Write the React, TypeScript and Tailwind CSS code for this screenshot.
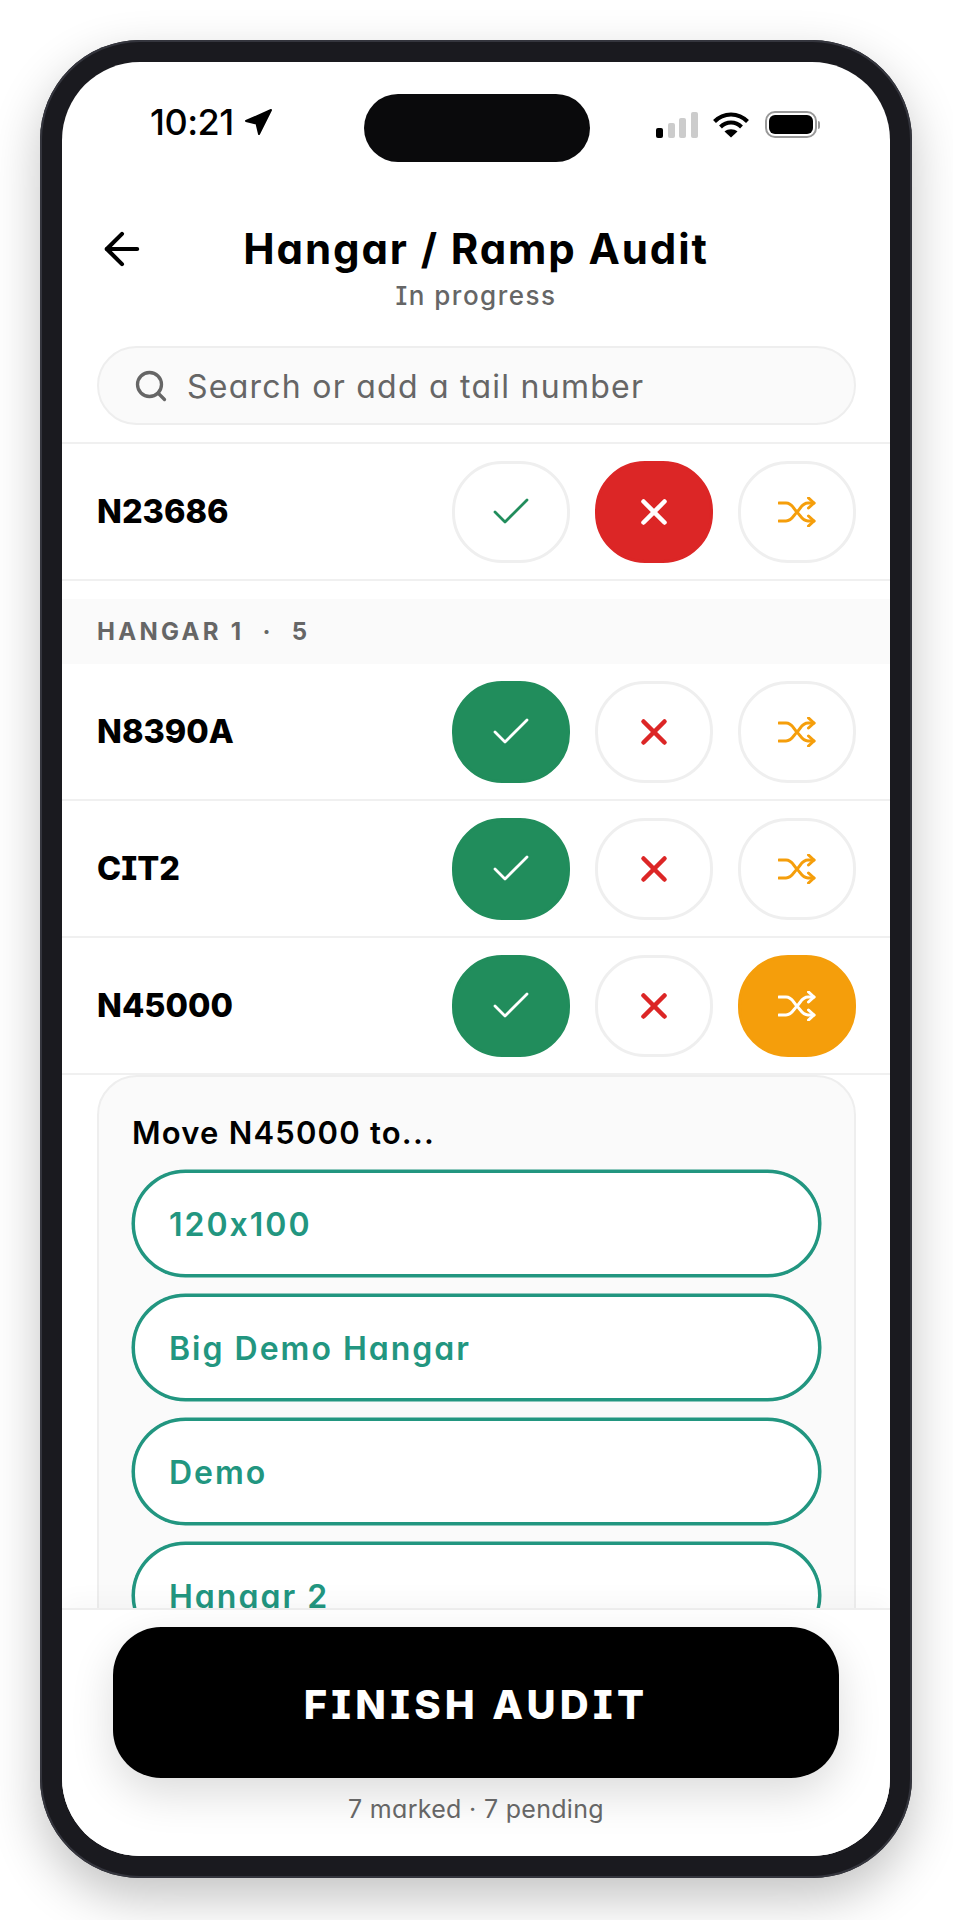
import { ArrowLeft, Check, Search, X } from "lucide-react";

type Mark = "none" | "ok" | "bad" | "move";

function ShuffleIcon() {
  return (
    <svg width="38" height="30" viewBox="0 0 38 30" fill="none" stroke="currentColor" strokeWidth="3" strokeLinecap="round" strokeLinejoin="round">
      <path d="M1 6H8C14 6 15 11 19 15C23 19 24 24 30 24H36" />
      <path d="M1 24H8C14 24 15 19 19 15C23 11 24 6 30 6H36" />
      <path d="M30.5 1L36 6L30.5 11" />
      <path d="M30.5 19L36 24L30.5 29" />
    </svg>
  );
}

function ActionButton({ kind, active }: { kind: "ok" | "bad" | "move"; active: boolean }) {
  const bg = active
    ? kind === "ok"
      ? "bg-[#218d5c] border-[#218d5c]"
      : kind === "bad"
        ? "bg-[#dc2626] border-[#dc2626]"
        : "bg-[#f59e0b] border-[#f59e0b]"
    : "bg-white border-[#efefef]";
  const color = active
    ? "text-white"
    : kind === "ok"
      ? "text-[#218d5c]"
      : kind === "bad"
        ? "text-[#dc2626]"
        : "text-[#f59e0b]";
  return (
    <div className={`w-[118px] h-[102px] rounded-[50px] border-[3px] flex items-center justify-center ${bg} ${color}`}>
      {kind === "ok" && <Check size={48} strokeWidth={1.4} />}
      {kind === "bad" && <X size={42} strokeWidth={2.6} />}
      {kind === "move" && <ShuffleIcon />}
    </div>
  );
}

function Row({ tail, mark, move }: { tail: string; mark: Mark; move?: boolean }) {
  return (
    <div className="h-[137px] shrink-0 border-b-2 border-[#f0f0f0] pl-[35px] pr-[34px] flex items-center justify-between">
      <span className="text-[32.5px] font-extrabold text-black pt-[2px]">{tail}</span>
      <div className="flex gap-[25px]">
        <ActionButton kind="ok" active={mark === "ok"} />
        <ActionButton kind="bad" active={mark === "bad"} />
        <ActionButton kind="move" active={!!move} />
      </div>
    </div>
  );
}

function MoveOption({ label }: { label: string }) {
  return (
    <div className="h-[107px] shrink-0 rounded-full border-[3px] border-[#229680] shadow-[0_0_0_0.5px_#229680] bg-white px-[34px] pt-[2px] flex items-center text-[32px] font-semibold tracking-[2px] text-[#229680]">
      {label}
    </div>
  );
}

function StatusIcons() {
  return (
    <div className="flex items-center gap-[15.5px] w-[164px]">
      <div className="flex items-end gap-[4.5px] h-[26px]">
        <div className="w-[7px] h-[10px] rounded-[2px] bg-black" />
        <div className="w-[7px] h-[15px] rounded-[2px] bg-[#cccccc]" />
        <div className="w-[7px] h-[20px] rounded-[2px] bg-[#cccccc]" />
        <div className="w-[7px] h-[26px] rounded-[2px] bg-[#cccccc]" />
      </div>
      <svg width="36" height="27" viewBox="0 0 36 27" fill="none" stroke="black" strokeWidth="4">
        <path d="M1.5 10.5C10.5 1 25.5 1 34.5 10.5" />
        <path d="M7.5 16C13.5 10 22.5 10 28.5 16" />
        <path d="M18 26.5L11.5 20.5C15 17.5 21 17.5 24.5 20.5Z" fill="black" stroke="none" />
      </svg>
      <div className="flex items-center gap-[1px]">
        <div className="w-[52px] h-[27px] rounded-[10px] border-2 border-[#999999] p-[2px]">
          <div className="w-full h-full rounded-[6px] bg-black" />
        </div>
        <div className="w-[2px] h-[8px] rounded-r-full bg-[#999999]" />
      </div>
    </div>
  );
}

export default function App() {
  return (
    <div className="w-[953px] h-[1920px] bg-white pt-[40px] pl-[40px] [font-family:Inter,'Liberation_Sans',sans-serif] [font-feature-settings:'cv11','cv08','calt'_0]">
      <div className="w-[872px] h-[1838px] rounded-[100px] p-[22px] bg-[#1a1a1f] shadow-[inset_0_0_0_2px_#34353d,0_20px_50px_rgba(0,0,0,0.24)]">
        <div className="h-full rounded-[78px] overflow-hidden bg-white flex flex-col">
          {/* status bar */}
          <div className="shrink-0 h-[100px] pt-[32px] pl-[88px] flex items-start">
            <div className="w-[214px] flex items-center gap-[10px] h-[36px] pt-[20px]">
              <span className="text-[36px] leading-none font-medium text-black tracking-[-0.5px]">10:21</span>
              <svg width="28" height="28" viewBox="0 0 28 28" fill="black" stroke="black" strokeWidth="2" strokeLinejoin="round">
                <path d="M2 13L27 2L15 26L12.5 15.5Z" />
              </svg>
            </div>
            <div className="w-[226px] h-[68px] rounded-[34px] bg-[#0a0a0c] shrink-0" />
            <div className="pl-[66px] pt-[17px]">
              <StatusIcons />
            </div>
          </div>

          {/* header */}
          <div className="shrink-0 h-[184px] px-[35px] pt-[62px] relative flex flex-col items-center">
            <ArrowLeft className="absolute left-[34px] top-[61px] text-black" size={52} strokeWidth={1.9} />
            <h1 className="text-[42px] leading-[50px] font-bold tracking-[1.9px] text-black">Hangar / Ramp Audit</h1>
            <p className="text-[26px] leading-[30px] mt-[7px] font-medium tracking-[1.5px] text-[#666666]">In progress</p>
          </div>

          {/* search */}
          <div className="shrink-0 pl-[35px] pr-[34px] pb-[17px]">
            <div className="h-[79px] rounded-[40px] bg-[#fafafa] border-2 border-[#eeeeee] flex items-center pl-[34px] gap-[18px] text-[#666666]">
              <Search size={36} strokeWidth={2.2} />
              <span className="text-[32px] tracking-[1.25px] pt-[2px]">Search or add a tail number</span>
            </div>
          </div>

          {/* list */}
          <div className="flex-1 min-h-0 overflow-hidden border-t-2 border-[#f0f0f0] flex flex-col">
            <Row tail="N23686" mark="bad" />
            <div className="h-[65px] mt-[18px] shrink-0 bg-[#fafafa] px-[35px] flex items-center text-[24px] font-bold tracking-[3.3px] text-[#666666] whitespace-pre">
              HANGAR 1  ·  5
            </div>
            <Row tail="N8390A" mark="ok" />
            <Row tail="CIT2" mark="ok" />
            <Row tail="N45000" mark="ok" move />
            <div className="ml-[35px] mr-[34px] shrink-0 rounded-t-[40px] bg-[#fafafa] border-2 border-[#eeeeee] px-[33px] pt-[36px] flex flex-col gap-[17px]">
              <p className="text-[31px] leading-[40px] font-semibold tracking-[1.2px] text-black">Move N45000 to...</p>
              <MoveOption label="120x100" />
              <MoveOption label="Big Demo Hangar" />
              <MoveOption label="Demo" />
              <MoveOption label="Hangar 2" />
            </div>
          </div>

          {/* footer */}
          <div className="relative shrink-0 h-[248px] border-t-2 border-[#eeeeee] px-[51px] pt-[17px] flex flex-col items-center bg-white shadow-[0_-8px_24px_rgba(0,0,0,0.03)]">
            <div className="w-full h-[151px] pt-[4px] rounded-[48px] bg-black flex items-center justify-center shadow-[0_16px_44px_rgba(0,0,0,0.14)] text-[40px] font-extrabold tracking-[4.3px] text-white">
              FINISH AUDIT
            </div>
            <p className="mt-[15px] text-[25px] leading-[32px] tracking-[0.3px] text-[#666666]">7 marked · 7 pending</p>
          </div>
        </div>
      </div>
    </div>
  );
}
